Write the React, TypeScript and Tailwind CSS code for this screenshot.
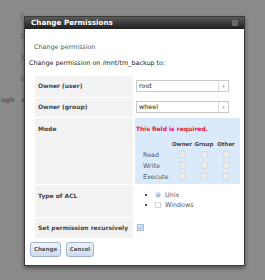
import { Fragment } from "react";
import { Check } from "lucide-react";

const font = { fontFamily: '"DejaVu Sans", Verdana, sans-serif' };

function Select({ value }: { value: string }) {
  return (
    <div className="flex h-[12px] w-[93px] items-center border border-[#c8c8c8] bg-white">
      <span className="flex-1 pl-[2px] text-[6.4px] leading-none text-[#222]">{value}</span>
      <span className="flex h-full w-[10px] items-center justify-center border-l border-[#dcdcdc] text-[5px] text-[#aaa]">
        ▾
      </span>
    </div>
  );
}

function Box() {
  return <span className="block h-[7px] w-[7px] border border-[#dadada] bg-[#ebebeb]" />;
}

export default function App() {
  const perms = ["Read", "Write", "Execute"];

  return (
    <div className="relative h-[280px] w-[265px] overflow-hidden bg-[#8a8a8a]" style={font}>
      {/* page behind the overlay */}
      <div className="flex flex-col pl-[1px] pt-[13px] text-[6.4px] leading-none text-[#5a5a5a]">
        <span className="h-[20px] pl-[19px]">2</span>
        <span className="h-[22px] pl-[19px]">1</span>
        <span className="h-[21px] pl-[19px]">3</span>
        <span className="h-[21px] pl-[19px]">0</span>
        <span className="font-bold">ugh&nbsp;&nbsp;&nbsp;a</span>
      </div>

      {/* DIALOG */}
      <div className="absolute left-[24px] top-[16px] w-[221px] border border-[#3a3a3a] bg-white shadow-[0_2px_4px_rgba(0,0,0,0.45)]">
        <div className="flex h-[12px] items-center justify-between bg-gradient-to-b from-[#5c5c5c] to-[#1f1f1f] pl-[6px] pr-[6px]">
          <span className="text-[7.2px] font-bold leading-none text-white">Change Permissions</span>
          <span className="h-[6px] w-[6px] rounded-[1px] bg-[#6a6a6a]" />
        </div>

        <div className="px-[4px] pt-[15px] pb-[8px] text-[6.4px] leading-none">
          <p className="pl-[5px] text-[#555]">Change permission</p>
          <p className="mt-[10px] text-[#222]">Change permission on /mnt/tm_backup to:</p>

          <div className="mt-[9px] ml-[6px] grid w-[205px] grid-cols-[98px_105px] gap-x-[2px] gap-y-[1px]">
            <div className="flex h-[21px] items-center bg-[#f2f2f2] pl-[3px] text-[6px] font-bold text-[#444]">Owner (user)</div>
            <div className="flex items-center pl-[1px]">
              <Select value="root" />
            </div>

            <div className="flex h-[19px] items-center bg-[#f2f2f2] pl-[3px] text-[6px] font-bold text-[#444]">Owner (group)</div>
            <div className="flex items-center pl-[1px]">
              <Select value="wheel" />
            </div>

            <div className="h-[66px] bg-[#f2f2f2] pl-[3px] pt-[8px] text-[6px] font-bold text-[#444]">Mode</div>
            <div className="bg-[#dbeafb] pl-[1px] pt-[8px]">
              <p className="text-[6px] font-bold text-[#e0163f]">This field is required.</p>
              <div className="mt-[10px] grid grid-cols-[28px_22px_22px_22px] items-center gap-y-[4px] pl-[7px] text-[#333]">
                <span />
                <span className="text-center text-[5.5px] font-bold text-[#444]">Owner</span>
                <span className="text-center text-[5.5px] font-bold text-[#444]">Group</span>
                <span className="text-center text-[5.5px] font-bold text-[#444]">Other</span>
                {perms.map((p) => (
                  <Fragment key={p}>
                    <span className="text-[#555]">{p}</span>
                    <span className="flex justify-center"><Box /></span>
                    <span className="flex justify-center"><Box /></span>
                    <span className="flex justify-center"><Box /></span>
                  </Fragment>
                ))}
              </div>
            </div>

            <div className="h-[32px] bg-[#f2f2f2] pl-[3px] pt-[8px] text-[6px] font-bold text-[#444]">Type of ACL</div>
            <div className="flex flex-col gap-[4px] pl-[10px] pt-[7px] text-[#555]">
              <div className="flex items-center gap-[4px]">
                <span className="h-[2px] w-[2px] rounded-full bg-[#111]" />
                <span className="ml-[4px] flex h-[6px] w-[6px] items-center justify-center rounded-full bg-[#d3dde9]">
                  <span className="h-[3px] w-[3px] rounded-full bg-[#a5b7cc]" />
                </span>
                <span>Unix</span>
              </div>
              <div className="flex items-center gap-[4px]">
                <span className="h-[2px] w-[2px] rounded-full bg-[#111]" />
                <span className="ml-[4px] h-[6px] w-[6px] border border-[#cfd6de] bg-white" />
                <span>Windows</span>
              </div>
            </div>

            <div className="flex h-[20px] items-center bg-[#f2f2f2] pl-[3px] text-[6px] font-bold text-[#444]">
              Set permission recursively
            </div>
            <div className="flex items-center pl-[2px]">
              <span className="flex h-[7px] w-[7px] items-center justify-center border border-[#a9c0dc] bg-[#d6e4f4]">
                <Check size={6} strokeWidth={3} color="#6d8fb9" />
              </span>
            </div>
          </div>

          <div className="mt-[4px] flex gap-[5px] pl-[1px]">
            <button className="h-[15px] w-[31px] rounded-[3px] border border-[#9fb4cf] bg-gradient-to-b from-[#eef4fb] to-[#cbdcf0] text-[5.5px] font-bold text-[#555]">
              Change
            </button>
            <button className="h-[15px] w-[28px] rounded-[3px] border border-[#9fb4cf] bg-gradient-to-b from-[#eef4fb] to-[#cbdcf0] text-[5.5px] font-bold text-[#555]">
              Cancel
            </button>
          </div>
        </div>
      </div>
    </div>
  );
}
